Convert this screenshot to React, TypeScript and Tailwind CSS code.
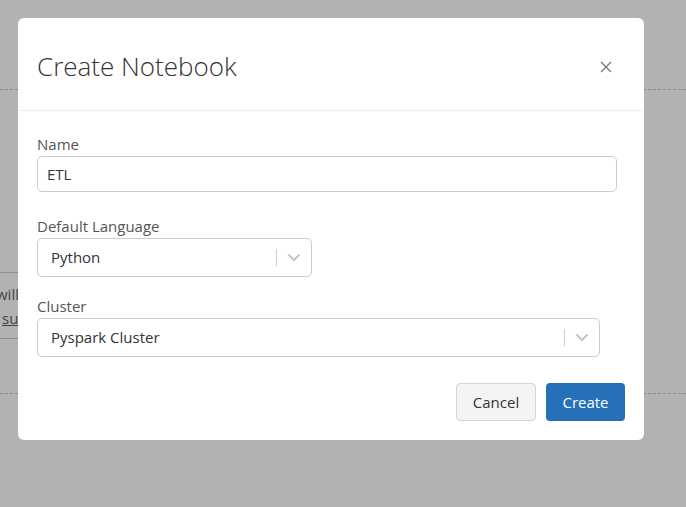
import React from 'react'

const font = { fontFamily: '"Open Sans", "Noto Sans", Arial, sans-serif' }

function Chevron() {
  return (
    <svg width="14" height="9" viewBox="0 0 14 9" fill="none">
      <path d="M1.5 1.5 L7 7 L12.5 1.5" stroke="#c4c4c4" strokeWidth="2" />
    </svg>
  )
}

function SelectBox({ value, width }: { value: string; width: string }) {
  return (
    <div className={`flex h-[39px] items-center rounded-[5px] border border-[#cccccc] bg-white ${width}`}>
      <span className="flex-1 pl-[13px] text-[15px] text-[#333333]">{value}</span>
      <span className="h-[17px] w-px bg-[#cccccc]" />
      <span className="flex w-[34px] items-center justify-center">
        <Chevron />
      </span>
    </div>
  )
}

export default function App() {
  return (
    <div className="relative h-[507px] w-[686px] overflow-hidden bg-[#b2b2b2]" style={font}>
      {/* page behind the overlay */}
      <div className="flex flex-col">
        <div className="h-[89px]" />
        <div className="border-t border-dashed border-[#8c8c8c]" />
        <div className="h-[182px]" />
        <div className="flex h-[67px] w-[18px] flex-col justify-center gap-[2px] overflow-hidden border-y border-[#8e8e8e] text-[15px] leading-[22px] text-[#444]">
          <span className="-ml-[4px] whitespace-nowrap">will</span>
          <span className="ml-[2px] whitespace-nowrap underline">su</span>
        </div>
        <div className="h-[54px]" />
        <div className="border-t border-dashed border-[#8c8c8c]" />
      </div>

      {/* modal */}
      <div className="absolute left-[18px] top-[18px] flex h-[422px] w-[626px] flex-col rounded-[6px] bg-white">
        <div className="flex h-[93px] items-center justify-between border-b border-[#eeeeee] pl-[19px] pr-[32px] pt-[5px]">
          <h1 className="text-[26px] font-light text-[#333333]">Create Notebook</h1>
          <svg width="12" height="12" viewBox="0 0 12 12">
            <path d="M1 1 L11 11 M11 1 L1 11" stroke="#777777" strokeWidth="1.3" />
          </svg>
        </div>

        <div className="flex flex-col px-[19px] pt-[22px]">
          <label className="text-[15px] leading-[22px] text-[#555555]">Name</label>
          <div className="mt-[1px] flex h-[36px] w-[580px] items-center rounded-[5px] border border-[#cccccc] pl-[9px] text-[15px] text-[#333333]">
            ETL
          </div>

          <label className="mt-[23px] text-[15px] leading-[22px] text-[#555555]">Default Language</label>
          <div className="mt-[1px]">
            <SelectBox value="Python" width="w-[275px]" />
          </div>

          <label className="mt-[18px] text-[15px] leading-[22px] text-[#555555]">Cluster</label>
          <div className="mt-[1px]">
            <SelectBox value="Pyspark Cluster" width="w-[563px]" />
          </div>
        </div>

        <div className="flex justify-end gap-[10px] pr-[19px] pt-[26px]">
          <button className="h-[38px] w-[80px] rounded-[4px] border border-[#d4d4d4] bg-[#f4f4f4] text-[15px] text-[#333333]">
            Cancel
          </button>
          <button className="h-[38px] w-[79px] rounded-[4px] bg-[#2670b8] text-[15px] text-white">
            Create
          </button>
        </div>
      </div>
    </div>
  )
}
